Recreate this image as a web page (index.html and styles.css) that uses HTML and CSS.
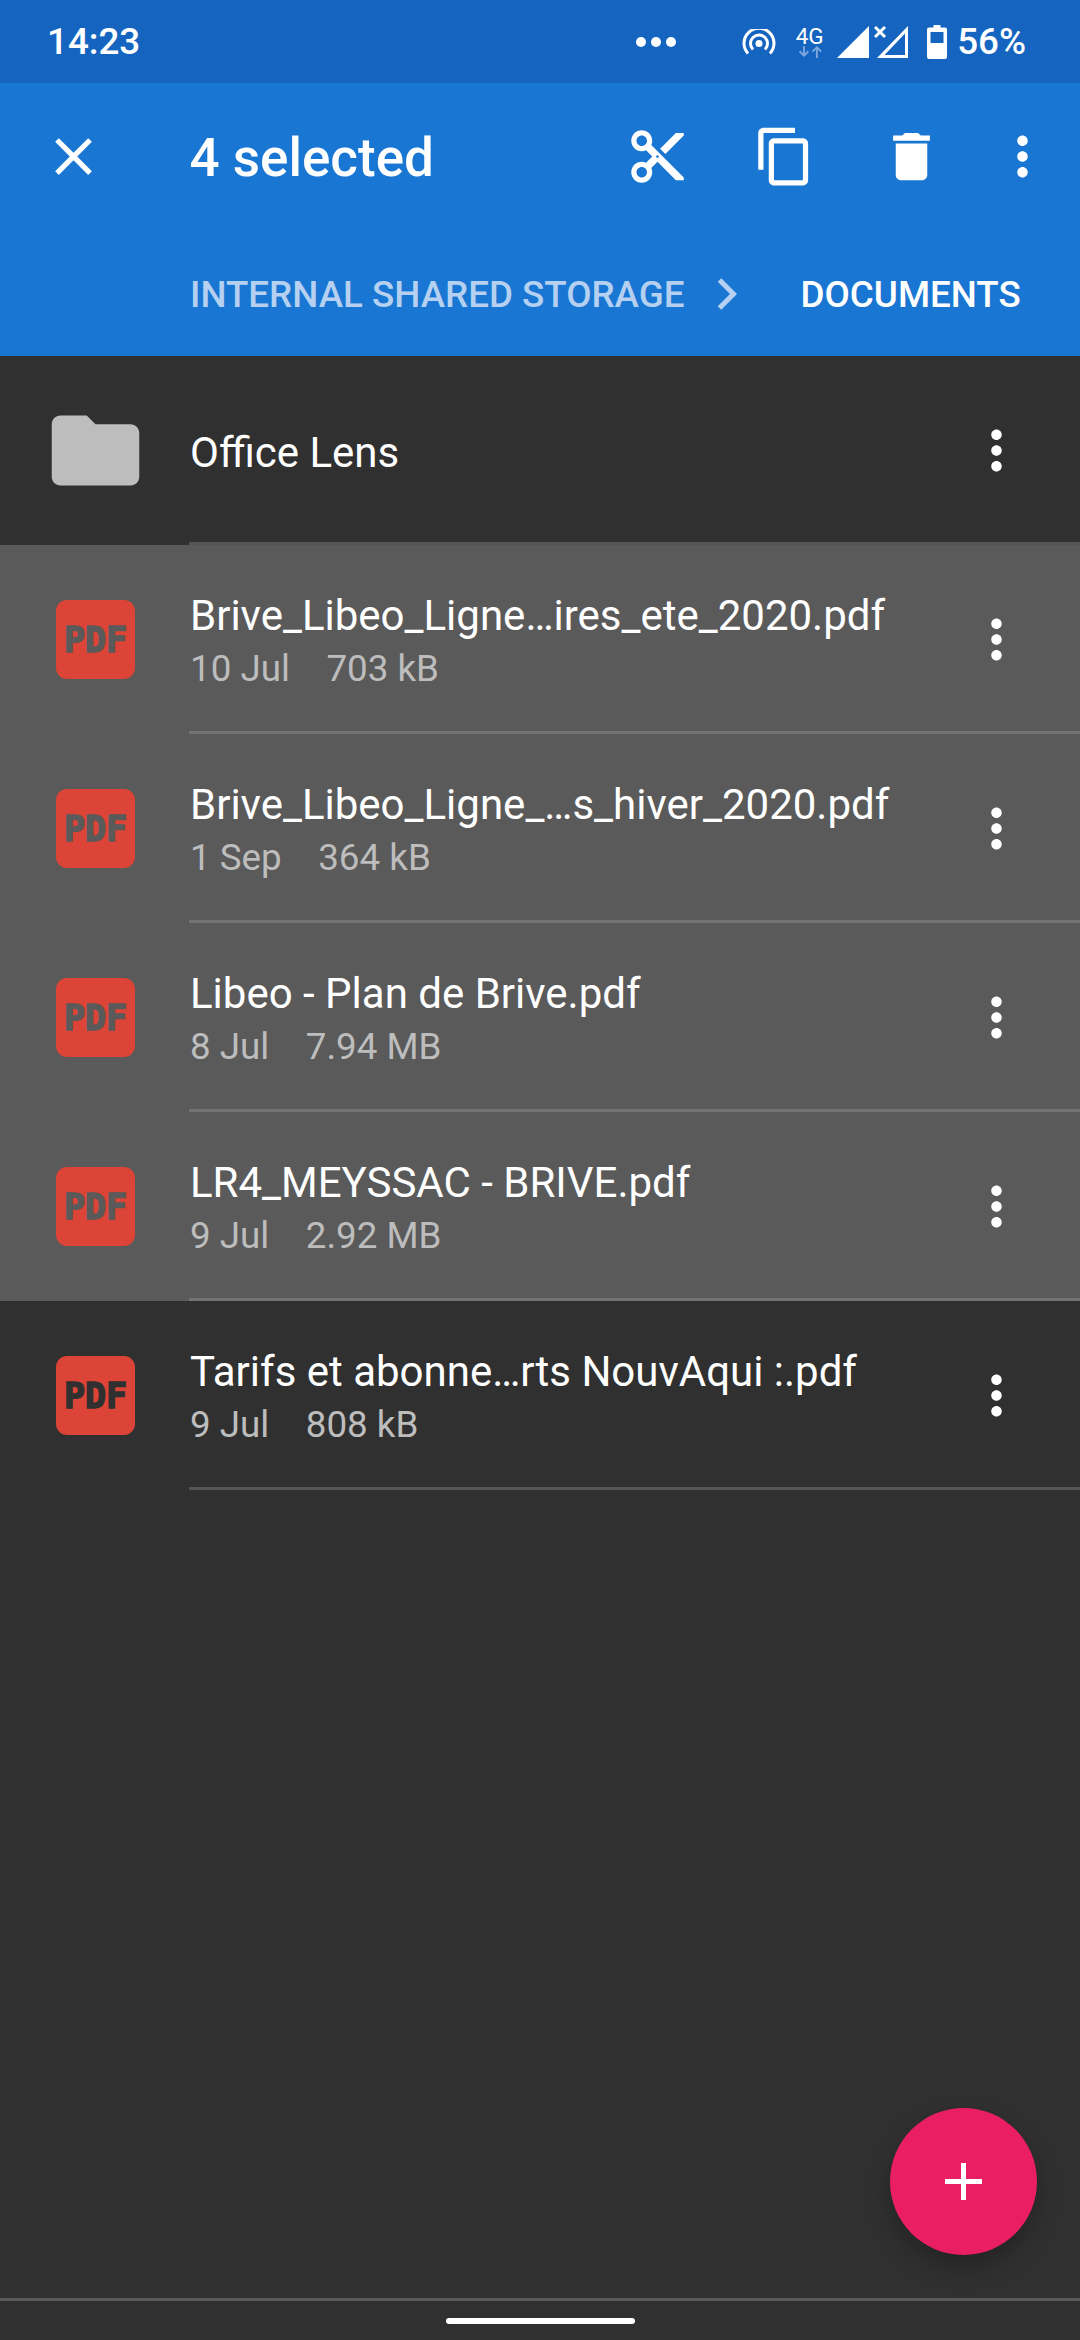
FILE: index.html
```html
<!DOCTYPE html>
<html lang="en">
<head>
    <meta charset="UTF-8">
    <meta name="viewport" content="width=device-width, initial-scale=1.0">
    <title>Documents</title>
    <link rel="stylesheet" href="styles.css">
</head>
<body>
    <svg class="defs" width="0" height="0">
        <symbol id="more" viewBox="0 0 24 24"><path d="M12 8c1.1 0 2-.9 2-2s-.9-2-2-2-2 .9-2 2 .9 2 2 2zm0 2c-1.1 0-2 .9-2 2s.9 2 2 2 2-.9 2-2-.9-2-2-2zm0 6c-1.1 0-2 .9-2 2s.9 2 2 2 2-.9 2-2-.9-2-2-2z"/></symbol>
    </svg>

    <div class="page">
        <!-- Status bar -->
        <div class="status-bar">
            <span class="status-time">14:23</span>
            <div class="status-dots"><i></i><i></i><i></i></div>
            <svg class="hotspot" width="34" height="26" viewBox="0 0 34 26" fill="none" stroke="#fff" stroke-width="3">
                <circle cx="17" cy="14.500" r="3.500" fill="#fff" stroke="none"/>
                <path d="M11 20.500a8.500 8.500 0 1 1 12 0"/>
                <path d="M6 24.500a15 15 0 1 1 22 0"/>
            </svg>
            <div class="network">
                <span class="network-label">4G</span>
                <svg width="26" height="12" viewBox="0 0 26 13" fill="#7fa8dc">
                    <path d="M5.500 0h2v8l3-3 1.400 1.400L6.500 12 1 6.400 2.400 5l3.100 3z"/>
                    <path d="M19.500 13h2V3.800l3 3 1.400-1.400L20.500 0 15 5.400l1.400 1.400 3.100-3z"/>
                </svg>
            </div>
            <svg class="signal" width="32" height="32" viewBox="0 0 32 32" fill="#fff"><path d="M32 0v32H0z"/></svg>
            <svg class="signal-off" width="34" height="32" viewBox="0 0 34 32" fill="#fff">
                <path fill-rule="evenodd" d="M34 0v32H3zM31 7.500L10.500 29H31z"/>
                <path d="M1 1l10 10M11 1L1 11" fill="none" stroke="#fff" stroke-width="3"/>
            </svg>
            <svg class="battery" width="20" height="34" viewBox="0 0 20 34" fill="#fff">
                <path fill-rule="evenodd" d="M6.500 0h7v2.500H18a2 2 0 0 1 2 2V32a2 2 0 0 1-2 2H2a2 2 0 0 1-2-2V4.500a2 2 0 0 1 2-2h4.500zM3.500 7v11h13V7z"/>
            </svg>
            <span class="status-battery">56%</span>
        </div>

        <!-- Selection toolbar -->
        <header class="toolbar">
            <div class="toolbar-row">
                <svg class="icon close-icon" viewBox="0 0 24 24"><path d="M19 6.410L17.590 5 12 10.590 6.410 5 5 6.410 10.590 12 5 17.590 6.410 19 12 13.410 17.590 19 19 17.590 13.410 12z"/></svg>
                <h1 class="toolbar-title">4 selected</h1>
                <svg class="icon cut-icon" viewBox="0 0 24 24"><path d="M9.640 7.640c.23-.5.36-1.050.36-1.640 0-2.210-1.790-4-4-4S2 3.790 2 6s1.790 4 4 4c.59 0 1.140-.13 1.640-.36L10 12l-2.360 2.360C7.140 14.130 6.590 14 6 14c-2.210 0-4 1.790-4 4s1.790 4 4 4 4-1.790 4-4c0-.59-.13-1.140-.36-1.640L12 14l7 7h3v-1L9.640 7.640zM6 8c-1.100 0-2-.89-2-2s.9-2 2-2 2 .89 2 2-.9 2-2 2zm0 12c-1.100 0-2-.89-2-2s.9-2 2-2 2 .89 2 2-.9 2-2 2zm6-7.500c-.28 0-.5-.22-.5-.5s.22-.5.5-.5.5.22.5.5-.22.5-.5.5zM19 3l-6 6 2 2 7-7V3z"/></svg>
                <svg class="icon copy-icon" viewBox="0 0 24 24"><path d="M16 1H4c-1.100 0-2 .9-2 2v14h2V3h12V1zm3 4H8c-1.100 0-2 .9-2 2v14c0 1.100.9 2 2 2h11c1.100 0 2-.9 2-2V7c0-1.100-.9-2-2-2zm0 16H8V7h11v14z"/></svg>
                <svg class="icon delete-icon" viewBox="0 0 24 24"><path d="M6 19c0 1.100.9 2 2 2h8c1.100 0 2-.9 2-2V7H6v12zM19 4h-3.500l-1-1h-5l-1 1H5v2h14V4z"/></svg>
                <svg class="icon toolbar-more"><use href="#more"/></svg>
            </div>
            <div class="breadcrumbs">
                <span class="crumb">INTERNAL SHARED STORAGE</span>
                <svg class="crumb-arrow" width="20" height="32" viewBox="0 0 20 32" fill="none" stroke="#b5d0f0" stroke-width="5"><path d="M2.500 2l14 14-14 14"/></svg>
                <span class="crumb crumb-current">DOCUMENTS</span>
            </div>
        </header>

        <!-- File list -->
        <main class="file-list">
            <div class="file-row">
                <div class="file-icon">
                    <svg class="folder-icon" viewBox="0 0 24 24"><path d="M10 4H4c-1.100 0-2 .9-2 2v12c0 1.100.9 2 2 2h16c1.100 0 2-.9 2-2V8c0-1.100-.9-2-2-2h-8l-2-2z"/></svg>
                </div>
                <div class="file-info">
                    <div class="file-name">Office Lens</div>
                </div>
                <svg class="icon row-more"><use href="#more"/></svg>
            </div>

            <div class="file-row selected">
                <div class="file-icon"><span class="pdf-icon">PDF</span></div>
                <div class="file-info">
                    <div class="file-name">Brive_Libeo_Ligne…ires_ete_2020.pdf</div>
                    <div class="file-meta"><span>10 Jul</span><span>703 kB</span></div>
                </div>
                <svg class="icon row-more"><use href="#more"/></svg>
            </div>

            <div class="file-row selected">
                <div class="file-icon"><span class="pdf-icon">PDF</span></div>
                <div class="file-info">
                    <div class="file-name">Brive_Libeo_Ligne_…s_hiver_2020.pdf</div>
                    <div class="file-meta"><span>1 Sep</span><span>364 kB</span></div>
                </div>
                <svg class="icon row-more"><use href="#more"/></svg>
            </div>

            <div class="file-row selected">
                <div class="file-icon"><span class="pdf-icon">PDF</span></div>
                <div class="file-info">
                    <div class="file-name">Libeo - Plan de Brive.pdf</div>
                    <div class="file-meta"><span>8 Jul</span><span>7.94 MB</span></div>
                </div>
                <svg class="icon row-more"><use href="#more"/></svg>
            </div>

            <div class="file-row selected">
                <div class="file-icon"><span class="pdf-icon">PDF</span></div>
                <div class="file-info">
                    <div class="file-name">LR4_MEYSSAC - BRIVE.pdf</div>
                    <div class="file-meta"><span>9 Jul</span><span>2.92 MB</span></div>
                </div>
                <svg class="icon row-more"><use href="#more"/></svg>
            </div>

            <div class="file-row">
                <div class="file-icon"><span class="pdf-icon">PDF</span></div>
                <div class="file-info">
                    <div class="file-name">Tarifs et abonne…rts NouvAqui :.pdf</div>
                    <div class="file-meta"><span>9 Jul</span><span>808 kB</span></div>
                </div>
                <svg class="icon row-more"><use href="#more"/></svg>
            </div>
        </main>

        <!-- Gesture bar -->
        <footer class="nav-bar"><div class="home-pill"></div></footer>

        <button class="fab" type="button">
            <svg width="37" height="37" viewBox="0 0 37 37" fill="#fff"><path d="M16 0h5v16h16v5H21v16h-5V21H0v-5h16z"/></svg>
        </button>
    </div>
</body>
</html>
```

FILE: styles.css
```css
body {
    font-family: 'Roboto', sans-serif;
    margin: 0;
    background-color: #303030;
    color: #fff;
}

.defs {
    display: block;
    height: 0;
}

.page {
    position: relative;
    display: flex;
    flex-direction: column;
    width: 1080px;
    height: 2340px;
    overflow: hidden;
}

.icon {
    display: block;
    flex: none;
    width: 63px;
    height: 63px;
    fill: #fff;
}

/* Status bar */
.status-bar {
    display: flex;
    align-items: center;
    flex: none;
    height: 83px;
    padding: 0 54px 0 47px;
    background-color: #1565c0;
    box-sizing: border-box;
}

.status-time {
    font-size: 36.75px;
    font-weight: 500;
    margin-right: auto;
}

.status-dots {
    display: flex;
    gap: 5px;
    margin-right: 66px;
}

.status-dots i {
    width: 10px;
    height: 10px;
    border-radius: 50%;
    background-color: #fff;
}

.hotspot {
    margin-right: 20px;
}

.network {
    display: flex;
    flex-direction: column;
    align-items: center;
    width: 27px;
    margin-right: 14px;
}

.network-label {
    font-size: 22.5px;
    line-height: 20px;
}

.signal-off {
    margin-left: 5px;
}

.battery {
    margin: 0 10px 0 19px;
}

.status-battery {
    font-size: 36.75px;
    font-weight: 500;
}

/* Toolbar */
.toolbar {
    flex: none;
    height: 273px;
    background-color: #1976d2;
}

.toolbar-row {
    display: flex;
    align-items: center;
    height: 147px;
    padding-left: 41.5px;
}

.toolbar-title {
    flex: 1;
    margin: 0 0 0 85px;
    padding-top: 3px;
    font-size: 53px;
    font-weight: 500;
}

.copy-icon,
.delete-icon {
    margin-left: 64px;
}

.toolbar-more {
    margin: 0 26.5px 0 47.5px;
}

.breadcrumbs {
    display: flex;
    align-items: center;
    height: 126px;
    padding: 2px 0 0 190px;
    box-sizing: border-box;
}

.crumb {
    font-size: 36.75px;
    font-weight: 500;
    color: #b5d0f0;
}

.crumb-arrow {
    margin: 0 64px 0 32px;
}

.crumb-current {
    color: #fff;
}

/* File list */
.file-list {
    flex: 1;
}

.file-row {
    display: flex;
    align-items: center;
    height: 189px;
    box-sizing: border-box;
    position: relative;
}

.file-row::after {
    content: '';
    position: absolute;
    left: 189px;
    right: 0;
    bottom: 0;
    height: 3px;
    background-color: #555;
}

.file-row.selected {
    background-color: #5a5a5a;
}

.file-row.selected::after {
    background-color: #737373;
}

.file-icon {
    display: flex;
    justify-content: center;
    align-items: center;
    flex: none;
    width: 105px;
    margin: 0 42px 0 43px;
}

.folder-icon {
    display: block;
    width: 105px;
    height: 105px;
    fill: #bdbdbd;
}

.pdf-icon {
    display: flex;
    justify-content: center;
    align-items: center;
    width: 79px;
    height: 79px;
    border-radius: 11px;
    background-color: #db4437;
    color: #303030;
    font-family: 'DejaVu Sans Mono', monospace;
    font-size: 35px;
    font-weight: 700;
    -webkit-text-stroke: 1.5px currentColor;
}

.selected .pdf-icon {
    color: #5a5a5a;
}

.file-info {
    flex: 1;
    min-width: 0;
    padding-top: 4px;
}

.file-name {
    font-size: 42px;
    line-height: 54px;
    white-space: nowrap;
}

.file-meta {
    display: flex;
    gap: 36.5px;
    font-size: 36.75px;
    line-height: 52px;
    color: #bdbdbd;
}

.row-more {
    margin-right: 52px;
}

/* Gesture bar */
.nav-bar {
    flex: none;
    height: 42px;
    border-top: 3px solid #5a5a5a;
    box-sizing: border-box;
    display: flex;
    justify-content: center;
    padding-top: 17px;
}

.home-pill {
    width: 189px;
    height: 6px;
    border-radius: 3px;
    background-color: #fff;
}

.fab {
    position: absolute;
    left: 890px;
    top: 2108px;
    display: flex;
    justify-content: center;
    align-items: center;
    width: 147px;
    height: 147px;
    padding: 0;
    border: none;
    border-radius: 50%;
    background-color: #e91e63;
    box-shadow: 0 12px 24px rgba(0, 0, 0, 0.25);
}
```
